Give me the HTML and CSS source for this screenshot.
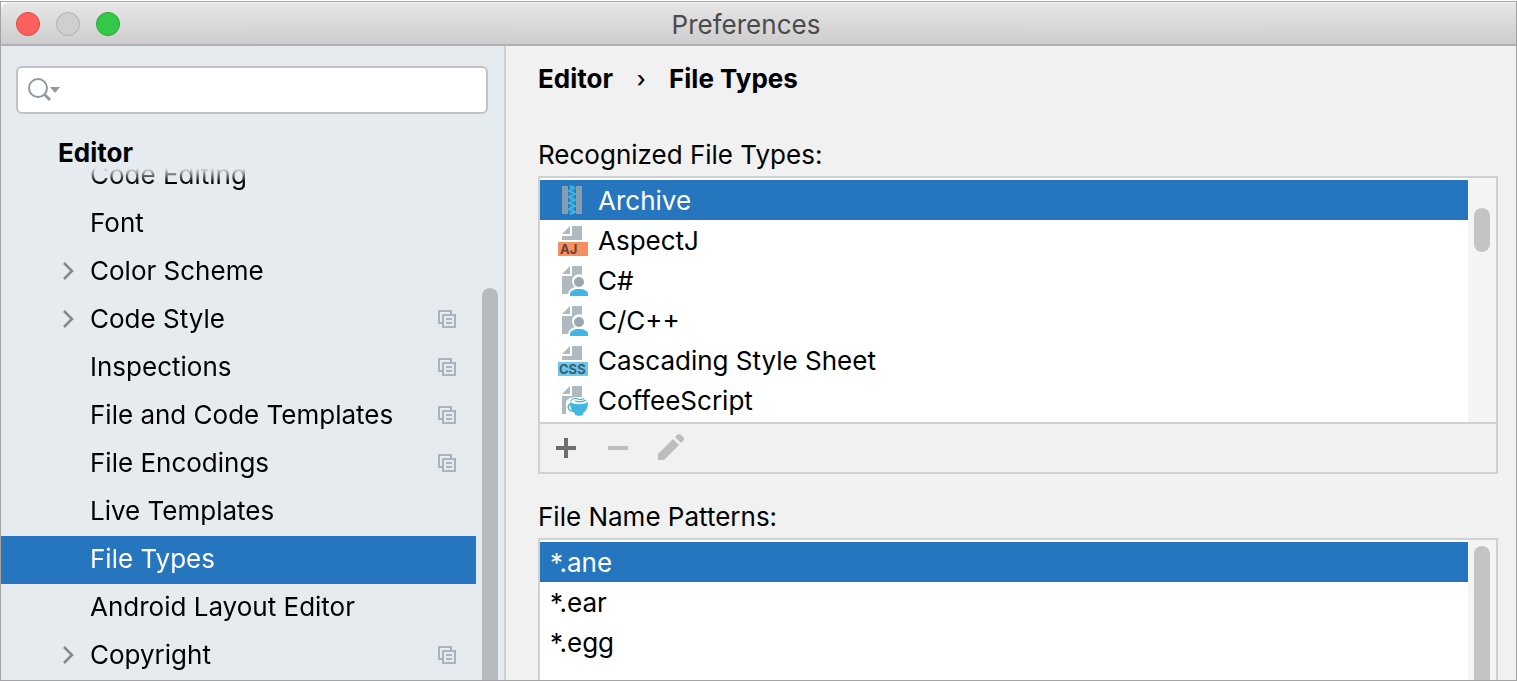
FILE: index.html
```html
<!DOCTYPE html>
<html lang="en">
<head>
  <meta charset="UTF-8">
  <meta name="viewport" content="width=device-width, initial-scale=1.0">
  <title>Preferences</title>
  <link rel="stylesheet" href="styles.css">
</head>
<body>
  <!-- shared icons -->
  <svg class="sprite" aria-hidden="true">
    <symbol id="copy" viewBox="0 0 18 18">
      <path d="M13 4V1H1v12h3M5 5h12v12H5z" fill="none" stroke="#a9b5be" stroke-width="2"/>
      <path d="M8 8h6v2H8zM8 12h6v2H8z" fill="#a9b5be"/>
    </symbol>
    <symbol id="chevron" viewBox="0 0 12 18">
      <path d="M2 1l8 8-8 8" fill="none" stroke="#85888b" stroke-width="2.5"/>
    </symbol>
    <symbol id="page" viewBox="0 0 32 32">
      <path d="M14 2v8H6zM16 2h10v28H6V12h10z" fill="#aeb9c0"/>
    </symbol>
    <symbol id="half-page" viewBox="0 0 32 32">
      <path d="M14 2v8H6zM16 2h10v14H6v-4h10z" fill="#aeb9c0"/>
    </symbol>
    <symbol id="person" viewBox="0 0 32 32">
      <use href="#page"/>
      <path d="M12 32c0-5 3-8 7-9a7 7 0 1 1 8 0c3 1 5 3 5 9z" fill="#fff"/>
      <circle cx="23" cy="18" r="5" fill="#9aa7b0"/>
      <path d="M14 32v-2c0-3 4-5 9-5s9 2 9 5v2z" fill="#40b6e0"/>
    </symbol>
  </svg>

  <div class="window">
    <header class="titlebar">
      <div class="lights">
        <button class="light close" aria-label="Close"></button>
        <button class="light minimize" aria-label="Minimize" disabled></button>
        <button class="light maximize" aria-label="Zoom"></button>
      </div>
      <h1>Preferences</h1>
    </header>

    <div class="content">
      <aside class="sidebar">
        <div class="search">
          <svg width="34" height="26" viewBox="0 0 34 26" aria-hidden="true">
            <circle cx="11" cy="11" r="9" fill="none" stroke="#8f999f" stroke-width="2"/>
            <path d="M17 17l6 6" stroke="#8f999f" stroke-width="3"/>
            <path d="M23 10h10l-5 6z" fill="#8f999f"/>
          </svg>
          <input type="search" aria-label="Search settings">
        </div>
        <div class="tree-pane">
          <nav class="tree" aria-label="Settings">
            <h2>Editor</h2>
            <ul>
              <li><a href="#">Code Editing</a></li>
              <li><a href="#">Font</a></li>
              <li><a href="#"><svg class="arrow"><use href="#chevron"/></svg>Color Scheme</a></li>
              <li><a href="#"><svg class="arrow"><use href="#chevron"/></svg>Code Style<svg class="copy"><use href="#copy"/></svg></a></li>
              <li><a href="#">Inspections<svg class="copy"><use href="#copy"/></svg></a></li>
              <li><a href="#">File and Code Templates<svg class="copy"><use href="#copy"/></svg></a></li>
              <li><a href="#">File Encodings<svg class="copy"><use href="#copy"/></svg></a></li>
              <li><a href="#">Live Templates</a></li>
              <li><a href="#" class="selected" aria-current="page">File Types</a></li>
              <li><a href="#">Android Layout Editor</a></li>
              <li><a href="#"><svg class="arrow"><use href="#chevron"/></svg>Copyright<svg class="copy"><use href="#copy"/></svg></a></li>
            </ul>
          </nav>
          <div class="tree-scroll"><div class="thumb"></div></div>
        </div>
      </aside>

      <main class="panel">
        <div class="breadcrumb"><a href="#">Editor</a><span class="sep">›</span><span>File Types</span></div>

        <section class="group">
          <h3 id="types-label">Recognized File Types:</h3>
          <div class="box">
            <div class="list-pane">
              <ul class="list types" role="listbox" aria-labelledby="types-label">
                <li role="option" class="selected" aria-selected="true">
                  <svg class="icon" viewBox="0 0 32 32">
                    <path d="M6 2h6v28H6zM20 2h6v28h-6z" fill="#879eb1"/>
                    <path d="M14 2l4 2-5 3 6 3-6 3 6 3-6 3 6 3-6 3 6 3-5 2" fill="none" stroke="#40b6e0" stroke-width="2"/>
                    <path d="M18 2l-4 2 5 3-6 3 6 3-6 3 6 3-6 3 6 3-6 3 5 2" fill="none" stroke="#40b6e0" stroke-dasharray="2 2"/>
                  </svg>
                  Archive
                </li>
                <li role="option">
                  <svg class="icon" viewBox="0 0 32 32">
                    <use href="#half-page"/>
                    <path d="M2 18h30v14H2z" fill="#f78f63"/>
                    <text x="4" y="30" class="badge orange">AJ</text>
                  </svg>
                  AspectJ
                </li>
                <li role="option"><svg class="icon"><use href="#person"/></svg>C#</li>
                <li role="option"><svg class="icon"><use href="#person"/></svg>C/C++</li>
                <li role="option">
                  <svg class="icon" viewBox="0 0 32 32">
                    <use href="#half-page"/>
                    <path d="M2 18h30v14H2z" fill="#71c7e7"/>
                    <text x="3" y="30" class="badge blue">CSS</text>
                  </svg>
                  Cascading Style Sheet
                </li>
                <li role="option">
                  <svg class="icon" viewBox="0 0 32 32">
                    <use href="#page"/>
                    <path d="M10 32V19c0-4 5-6 11-6s11 2 11 5v14z" fill="#fff"/>
                    <path d="M14 18c4 3 14 3 18 0 0 6-2 9-5 11v2c-2 1-6 1-8 0v-2c-3-1-5-5-5-11z" fill="#40b6e0"/>
                    <path d="M15 20c-4 0-4 7 2 7" fill="none" stroke="#40b6e0" stroke-width="1.5"/>
                    <path d="M15 17c1-3 5-3 7-2s5 1 6-1M19 17c3 1 8 1 11-1" fill="none" stroke="#40b6e0" stroke-width="1.2"/>
                  </svg>
                  CoffeeScript
                </li>
              </ul>
              <div class="track"><div class="thumb short"></div></div>
            </div>
            <div class="toolbar">
              <button aria-label="Add">
                <svg viewBox="0 0 32 32"><path d="M14 6h4v8h8v4h-8v8h-4v-8H6v-4h8z" fill="#6e6e6e"/></svg>
              </button>
              <button aria-label="Remove" disabled>
                <svg viewBox="0 0 32 32"><path d="M6 14h20v4H6z" fill="#bdbdbd"/></svg>
              </button>
              <button aria-label="Edit" disabled>
                <svg viewBox="0 0 32 32">
                  <path d="M4 22L19 7l6 6-15 15H4zM21 5l2-2q2-2 4 0l2 2q2 2 0 4l-2 2z" fill="#bdbdbd"/>
                </svg>
              </button>
            </div>
          </div>
        </section>

        <section class="group patterns-group">
          <h3 id="patterns-label">File Name Patterns:</h3>
          <div class="box">
            <div class="list-pane">
              <ul class="list patterns" role="listbox" aria-labelledby="patterns-label">
                <li role="option" class="selected" aria-selected="true">*.ane</li>
                <li role="option">*.ear</li>
                <li role="option">*.egg</li>
              </ul>
              <div class="track"><div class="thumb"></div></div>
            </div>
          </div>
        </section>
      </main>
    </div>
  </div>
</body>
</html>
```
FILE: styles.css
```css
*, *::before, *::after { box-sizing: border-box; }
body {
  margin: 0;
  padding-top: 1px;
  height: 100vh;
  font-family: Inter, "Open Sans", sans-serif;
  font-size: 26px;
  line-height: 40px;
  color: #000;
  background: #fff;
  overflow: hidden;
}
ul { list-style: none; margin: 0; padding: 0; }
h1, h2, h3 { margin: 0; font-size: 26px; font-weight: 400; }
a { color: inherit; text-decoration: none; }
svg { flex: none; }
.sprite { display: none; }

.window {
  display: flex;
  flex-direction: column;
  height: 100%;
  border: 1px solid #a3a3a3;
  overflow: hidden;
}

/* title bar */
.titlebar {
  display: grid;
  grid-template-columns: 1fr auto 1fr;
  align-items: center;
  flex: none;
  height: 44px;
  padding: 0 40px 0 15px;
  border-top: 1px solid #f6f6f6;
  border-bottom: 2px solid #b0b0b0;
  border-top-left-radius: 8px;
  background: linear-gradient(#e6e6e6, #cdcdcd);
}
.titlebar h1 { padding-top: 2px; color: #4b4b4b; }
.lights { display: flex; gap: 16px; }
.light {
  width: 24px;
  height: 24px;
  padding: 0;
  border-radius: 50%;
}
.close { background: #fc605c; border: 1px solid #e2443f; }
.minimize { background: #cfcfcf; border: 1px solid #b0b0b0; }
.maximize { background: #34c84a; border: 1px solid #24a833; }

.content {
  display: grid;
  grid-template-columns: 1fr 2fr;
  flex: 1;
  min-height: 0;
}

/* sidebar */
.sidebar {
  display: flex;
  flex-direction: column;
  min-height: 0;
  padding-top: 20px;
  background: #e6ebef;
  border-right: 2px solid #d0d0d0;
}
.search {
  display: flex;
  align-items: center;
  flex: none;
  height: 48px;
  margin: 0 16px 0 15px;
  padding: 0 9px;
  background: #fff;
  border: 2px solid #c2c2c2;
  border-radius: 6px;
}
.search input {
  flex: 1;
  min-width: 0;
  border: none;
  outline: none;
  background: none;
  font: inherit;
}
.tree-pane {
  display: flex;
  flex: 1;
  min-height: 0;
  padding-top: 19px;
}
.tree {
  display: flex;
  flex-direction: column;
  flex: 1;
  min-width: 0;
}
.tree h2 {
  flex: none;
  height: 35px;
  padding-left: 57px;
  font-weight: 700;
}
/* rows fade out under the pinned heading */
.tree ul {
  flex: 1;
  min-height: 0;
  overflow: hidden;
  -webkit-mask-image: linear-gradient(transparent, #000 14px);
  mask-image: linear-gradient(transparent, #000 14px);
}
.tree li:first-child { margin-top: -16px; }
.tree a {
  display: flex;
  align-items: center;
  height: 48px;
  padding: 0 20px 2px 89px;
  white-space: nowrap;
}
.arrow {
  width: 12px;
  height: 18px;
  margin: 0 16px 0 -28px;
}
.copy {
  width: 18px;
  height: 18px;
  margin-left: auto;
}
.selected { background: #2675bf; color: #fff; }
.tree-scroll {
  flex: none;
  width: 28px;
  padding: 155px 6px 0;
}
.tree-scroll .thumb { background: #b7bbc0; }
.thumb {
  height: 100%;
  background: #c4c4c4;
  border-radius: 8px 8px 0 0;
}

/* settings panel */
.panel {
  display: flex;
  flex-direction: column;
  min-width: 0;
  min-height: 0;
  padding: 13px 18px 0 32px;
  background: #f1f1f1;
}
.breadcrumb {
  display: flex;
  flex: none;
  font-weight: 700;
}
.sep {
  width: 56px;
  text-align: center;
  font-size: 22px;
  font-weight: 500;
}
.group { flex: none; margin-top: 36px; }
.group h3 { height: 41px; }
.box { border: 2px solid #d0d0d0; }
.list-pane { display: flex; background: #fff; }
.list { flex: 1; padding: 2px 0; }
.list li {
  display: flex;
  align-items: center;
  gap: 10px;
  height: 40px;
  padding: 2px 16px 0;
}
.patterns li { padding: 2px 10px 0; }
.icon {
  width: 32px;
  height: 32px;
  margin-bottom: 2px;
}
.badge { font-size: 13px; font-weight: 700; }
.orange { fill: #6b4033; }
.blue { fill: #35607a; }
.track {
  width: 28px;
  padding: 30px 6px 0;
  background: #f4f4f4;
}
.thumb.short { height: 44px; border-radius: 8px; }
.toolbar {
  display: flex;
  gap: 20px;
  height: 50px;
  padding: 8px 10px;
  border-top: 2px solid #d0d0d0;
}
.toolbar button {
  width: 32px;
  height: 32px;
  padding: 0;
  border: none;
  background: none;
}
.toolbar svg { display: block; }

.patterns-group {
  display: flex;
  flex-direction: column;
  flex: 1;
  min-height: 0;
  margin-top: 23px;
}
.patterns-group .box {
  display: flex;
  flex: 1;
  border-bottom: none;
}
.patterns-group .list-pane { flex: 1; }
.patterns-group .track { padding-top: 6px; }
```
